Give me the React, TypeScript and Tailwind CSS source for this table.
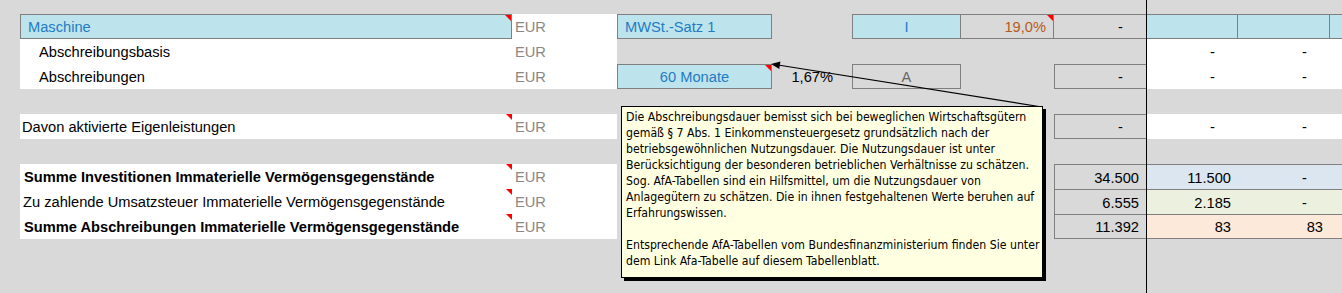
import React from "react";

const cols =
  "grid h-[25px] grid-cols-[20px_492px_105px_155px_80px_109px_93px_92px_92px_92px_1fr] *:pt-[2px]";

const noteLines: string[] = [
  "Die Abschreibungsdauer bemisst sich bei beweglichen Wirtschaftsgütern",
  "gemäß § 7 Abs. 1 Einkommensteuergesetz grundsätzlich nach der",
  "betriebsgewöhnlichen Nutzungsdauer. Die Nutzungsdauer ist unter",
  "Berücksichtigung der besonderen betrieblichen Verhältnisse zu schätzen.",
  "Sog. AfA-Tabellen sind ein Hilfsmittel, um die Nutzungsdauer von",
  "Anlagegütern zu schätzen. Die in ihnen festgehaltenen Werte beruhen auf",
  "Erfahrungswissen.",
  "",
  "Entsprechende AfA-Tabellen vom Bundesfinanzministerium finden Sie unter",
  "dem Link Afa-Tabelle auf diesem Tabellenblatt.",
];

// small red comment marker in the top right corner of a cell
function Tri() {
  return (
    <span className="absolute right-0 top-0 h-0 w-0 border-l-[6px] border-t-[6px] border-l-transparent border-t-[#ff0000]" />
  );
}

function Row({ children }: { children?: React.ReactNode }) {
  return <div className={cols}>{children}</div>;
}

function Eur() {
  return <div className="flex items-center bg-white pl-[3px] text-[#8c8783]">EUR</div>;
}

function Dash({ white = true }: { white?: boolean }) {
  return (
    <div className={`flex items-center justify-end pr-[23px] ${white ? "bg-white" : ""}`}>-</div>
  );
}

function SumRow({
  label,
  bold,
  first,
  last,
  a,
  b,
  c,
  tint,
}: {
  label: string;
  bold?: boolean;
  first?: boolean;
  last?: boolean;
  a: string;
  b: string;
  c: string;
  tint: string;
}) {
  const edge = `border-[#7f7f7f] border-t ${last ? "border-b" : ""}`;
  return (
    <Row>
      <div />
      <div className={`relative flex items-center bg-white ${bold ? "pl-[4px] font-bold" : "pl-[3px]"}`}>
        {label}
        <Tri />
      </div>
      <Eur />
      <div />
      <div />
      <div />
      <div />
      <div className={`flex items-center justify-end border-l pr-[7px] ${edge}`}>{a}</div>
      <div className={`flex items-center justify-end pr-[7px] ${tint} ${edge}`}>{b}</div>
      <div className={`flex items-center justify-end ${c === "-" ? "pr-[23px]" : "pr-[7px]"} ${tint} ${edge}`}>
        {c}
      </div>
      <div className={`${tint} ${edge}`} />
    </Row>
  );
}

export default function App() {
  return (
    <div className="relative h-[293px] w-[1342px] overflow-hidden bg-[#d9d9d9] pt-[14px] font-['Liberation_Sans',Arial,sans-serif] text-[14.67px] leading-none text-black">
      {/* Maschine */}
      <Row>
        <div />
        <div className="relative flex items-center border border-[#7f7f7f] bg-[#bde4ec] pl-[7px] text-[#1f7bc4]">
          Maschine
          <Tri />
        </div>
        <Eur />
        <div className="flex items-center border border-[#7f7f7f] bg-[#bde4ec] pl-[7px] text-[#1f7bc4]">
          MWSt.-Satz 1
        </div>
        <div />
        <div className="flex items-center justify-center border border-[#7f7f7f] bg-[#bde4ec] text-[#1f7bc4]">I</div>
        <div className="relative flex items-center justify-end border-y border-r border-[#7f7f7f] pr-[7px] text-[#b85a1c]">
          19,0%
          <Tri />
        </div>
        <div className="flex items-center justify-end border-y border-[#7f7f7f] pr-[23px]">-</div>
        <div className="border-y border-r border-[#7f7f7f] bg-[#bde4ec]" />
        <div className="border-y border-r border-[#7f7f7f] bg-[#bde4ec]" />
        <div className="border-y border-[#7f7f7f] bg-[#bde4ec]" />
      </Row>

      <Row>
        <div />
        <div className="flex items-center bg-white pl-[19px]">Abschreibungsbasis</div>
        <Eur />
        <div />
        <div />
        <div />
        <div />
        <div />
        <Dash />
        <Dash />
        <div className="bg-white" />
      </Row>

      <Row>
        <div />
        <div className="flex items-center bg-white pl-[19px]">Abschreibungen</div>
        <Eur />
        <div className="relative flex items-center justify-center border border-[#7f7f7f] bg-[#bde4ec] text-[#1f7bc4]">
          60 Monate
          <Tri />
        </div>
        <div className="flex items-center justify-end pr-[19px]">1,67%</div>
        <div className="flex items-center justify-center border border-[#7f7f7f] text-[#666666]">A</div>
        <div />
        <div className="flex items-center justify-end border-y border-l border-[#7f7f7f] pr-[23px]">-</div>
        <Dash />
        <Dash />
        <div className="bg-white" />
      </Row>

      <Row />

      <Row>
        <div />
        <div className="relative flex items-center bg-white pl-[2px]">
          Davon aktivierte Eigenleistungen
          <Tri />
        </div>
        <Eur />
        <div />
        <div />
        <div />
        <div />
        <div className="flex items-center justify-end border-y border-l border-[#7f7f7f] pr-[23px]">-</div>
        <Dash />
        <Dash />
        <div className="bg-white" />
      </Row>

      <Row />

      <SumRow
        first
        bold
        label="Summe Investitionen Immaterielle Vermögensgegenstände"
        a="34.500"
        b="11.500"
        c="-"
        tint="bg-[#dce6f1]"
      />
      <SumRow
        label="Zu zahlende Umsatzsteuer Immaterielle Vermögensgegenstände"
        a="6.555"
        b="2.185"
        c="-"
        tint="bg-[#ebf1de]"
      />
      <SumRow
        last
        bold
        label="Summe Abschreibungen Immaterielle Vermögensgegenstände"
        a="11.392"
        b="83"
        c="83"
        tint="bg-[#fde9d9]"
      />

      {/* frozen pane divider */}
      <div className="absolute bottom-0 left-[1146px] top-0 w-px bg-black" />

      {/* comment arrow */}
      <svg className="pointer-events-none absolute left-0 top-0" width="1342" height="293">
        <line x1="1042" y1="107" x2="778" y2="65" stroke="#000" strokeWidth="1.2" />
        <polygon points="771,64 780.4,61.6 779.3,68.9" fill="#000" />
      </svg>

      {/* comment box */}
      <div className="absolute left-[621px] top-[106px] h-[172px] w-[422px] border border-black bg-[#ffffe1] pl-[4px] pt-[2px] font-['DejaVu_Sans_Condensed','DejaVu_Sans',sans-serif] text-[12.2px] leading-[16px] shadow-[3px_3px_0_#000] font-stretch-condensed">
        {noteLines.map((line, i) => (
          <div key={i} className="h-4 whitespace-nowrap">
            {line}
          </div>
        ))}
      </div>
    </div>
  );
}
